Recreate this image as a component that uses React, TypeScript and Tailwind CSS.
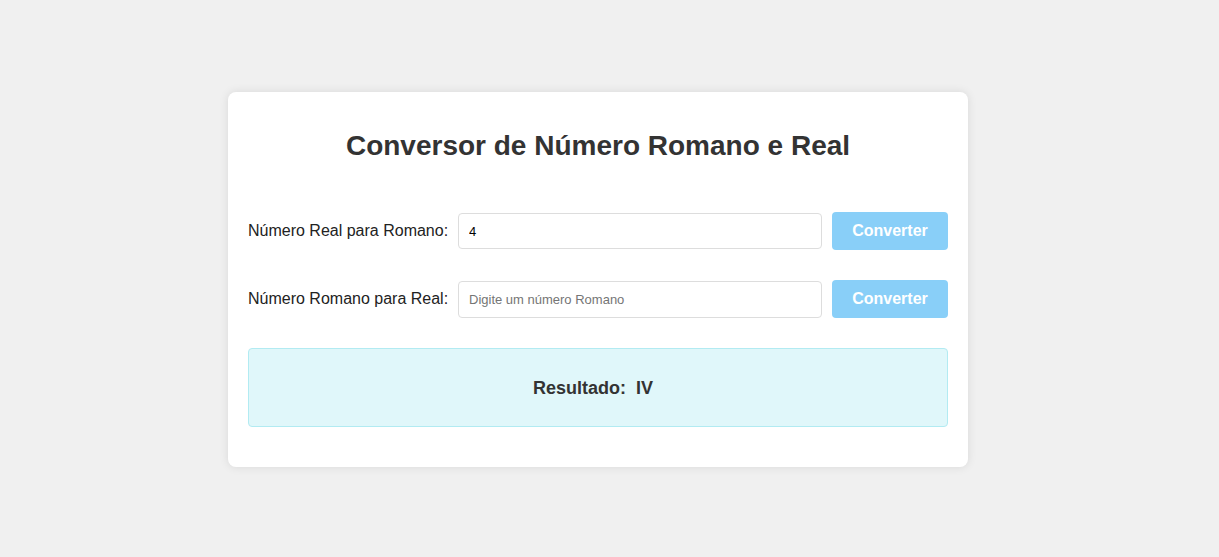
import React, { useState } from 'react';

const toRoman = (n: number): string => {
  const map: [number, string][] = [
    [1000, 'M'], [900, 'CM'], [500, 'D'], [400, 'CD'], [100, 'C'], [90, 'XC'],
    [50, 'L'], [40, 'XL'], [10, 'X'], [9, 'IX'], [5, 'V'], [4, 'IV'], [1, 'I'],
  ];
  let out = '';
  for (const [v, s] of map) {
    while (n >= v) { out += s; n -= v; }
  }
  return out;
};

const fromRoman = (s: string): number => {
  const v: Record<string, number> = { I: 1, V: 5, X: 10, L: 50, C: 100, D: 500, M: 1000 };
  let total = 0;
  const up = s.toUpperCase();
  for (let i = 0; i < up.length; i++) {
    const cur = v[up[i]] || 0;
    const next = v[up[i + 1]] || 0;
    total += cur < next ? -cur : cur;
  }
  return total;
};

const App: React.FC = () => {
  const [real, setReal] = useState('4');
  const [roman, setRoman] = useState('');
  const [result, setResult] = useState('IV');

  return (
    <div className="min-h-screen bg-[#f0f0f0] flex items-center font-['Liberation_Sans',Arial,sans-serif]">
      <div className="ml-[228px] mt-[2px] w-[740px] h-[375px] bg-white rounded-lg shadow-[0_0_10px_rgba(0,0,0,0.1)] px-5 pt-[38px]">
        <h1 className="text-[28px] leading-8 font-bold text-[#333] text-center">Conversor de Número Romano e Real</h1>

        <div className="mt-[50px] flex items-center">
          <label className="w-[200px] shrink-0 whitespace-nowrap text-base text-[#222]">Número Real para Romano:</label>
          <input
            value={real}
            onChange={(e) => setReal(e.target.value)}
            className="ml-[10px] min-w-0 flex-1 h-9 border border-[#ddd] rounded px-[10px] text-[13px] text-black outline-none"
          />
          <button
            onClick={() => setResult(toRoman(parseInt(real) || 0))}
            className="ml-[10px] w-[116px] shrink-0 h-[38px] bg-[#89cff8] text-white font-bold text-base rounded"
          >
            Converter
          </button>
        </div>

        <div className="mt-[30px] flex items-center">
          <label className="w-[200px] shrink-0 whitespace-nowrap text-base text-[#222]">Número Romano para Real:</label>
          <input
            value={roman}
            onChange={(e) => setRoman(e.target.value)}
            placeholder="Digite um número Romano"
            className="ml-[10px] min-w-0 flex-1 h-[37px] border border-[#ddd] rounded px-[10px] text-[13px] text-black placeholder:text-[#757575] outline-none"
          />
          <button
            onClick={() => setResult(String(fromRoman(roman)))}
            className="ml-[10px] w-[116px] shrink-0 h-[38px] bg-[#89cff8] text-white font-bold text-base rounded"
          >
            Converter
          </button>
        </div>

        <div className="mt-[30px] h-[79px] bg-[#e0f7fa] border border-[#b2ebf2] rounded flex items-center justify-center">
          <p className="text-lg font-bold text-[#333] whitespace-pre pr-[10px]">Resultado:  {result}</p>
        </div>
      </div>
    </div>
  );
};

export default App;
